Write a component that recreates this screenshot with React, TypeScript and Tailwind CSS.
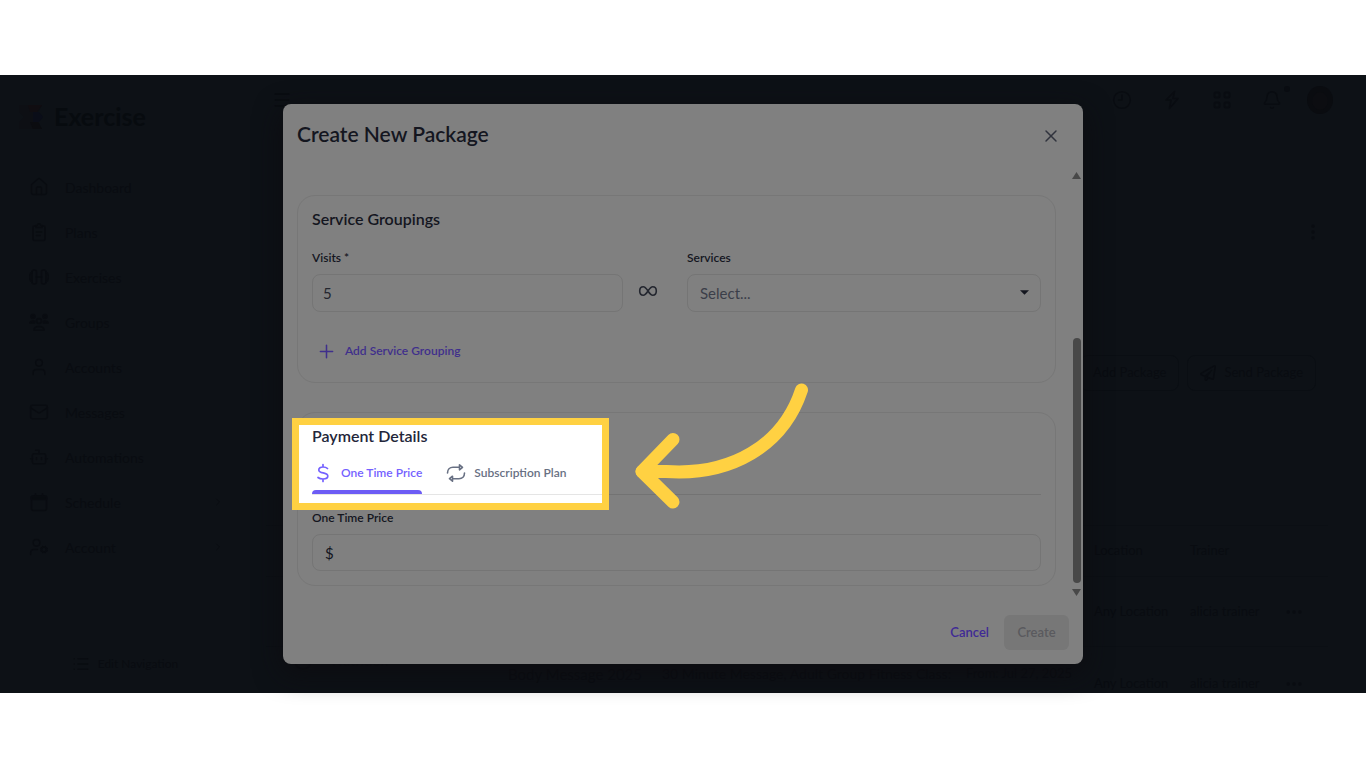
import React from "react";
import {
  House, User, Mail, Bot, UserCog, ChevronRight, List,
  Menu, Clock9, Bell, EllipsisVertical, Ellipsis, X, Plus,
} from "lucide-react";
import { FaRegPaperPlane } from "react-icons/fa";

const STROKE = {
  viewBox: "0 0 20 20",
  className: "h-5 w-5",
  fill: "none",
  stroke: "currentColor",
  strokeWidth: 1.6,
  strokeLinecap: "round",
  strokeLinejoin: "round",
  "aria-hidden": true,
} as const;

const HouseIcon = () => <House size={20} strokeWidth={1.75} />;
const UserIcon = () => <User size={20} strokeWidth={1.75} />;
const MailIcon = () => <Mail size={20} strokeWidth={1.75} />;
const BotIcon = () => <Bot size={20} strokeWidth={1.75} />;
const UserCogIcon = () => <UserCog size={20} strokeWidth={1.75} />;

function ClipboardIcon() {
  return (
    <svg {...STROKE}>
      <path d="M7 4H5.500C4.500 4 4 4.500 4 5.500V17C4 18 4.500 18.500 5.500 18.500H14.500C15.500 18.500 16 18 16 17V5.500C16 4.500 15.500 4 14.500 4H13" />
      <path d="M7 5.500V3.500H8.200C8.500 1.200 11.500 1.200 11.800 3.500H13V5.500ZM7.500 10H12.500M7.500 13.500H11" />
    </svg>
  );
}

function DumbbellIcon() {
  return (
    <svg {...STROKE}>
      <rect x="3" y="3" width="4.500" height="14" rx="2" />
      <rect x="12.500" y="3" width="4.500" height="14" rx="2" />
      <path d="M7.500 10H12.500M3 5.500C0 5.500 0 14.500 3 14.500M17 5.500C20 5.500 20 14.500 17 14.500" />
    </svg>
  );
}

function GroupIcon() {
  return (
    <svg {...STROKE}>
      <circle cx="4" cy="4.500" r="2" fill="currentColor" />
      <circle cx="16" cy="4.500" r="2" fill="currentColor" />
      <circle cx="10" cy="9" r="2.400" />
      <path d="M5 18.200C5 13.200 15 13.200 15 18.200ZM0.800 11C0.800 9.500 2.500 8.800 5.500 9.300V11ZM19.200 11C19.200 9.500 17.500 8.800 14.500 9.300V11Z" />
    </svg>
  );
}

function CalendarIcon() {
  return (
    <svg {...STROKE}>
      <rect x="2.500" y="4" width="15" height="14.500" rx="2" />
      <path d="M2.500 4.500H17.500V7.500H2.500ZM6.500 1.800V4M13.500 1.800V4" fill="currentColor" />
    </svg>
  );
}

const NAV = [
  { label: "Dashboard", Icon: HouseIcon },
  { label: "Plans", Icon: ClipboardIcon },
  { label: "Exercises", Icon: DumbbellIcon },
  { label: "Groups", Icon: GroupIcon },
  { label: "Accounts", Icon: UserIcon },
  { label: "Messages", Icon: MailIcon },
  { label: "Automations", Icon: BotIcon },
  { label: "Schedule", Icon: CalendarIcon, more: true },
  { label: "Account", Icon: UserCogIcon, more: true },
];

function Sidebar() {
  return (
    <aside className="flex w-[250px] shrink-0 flex-col px-[18px] pt-[26px] pb-5">
      <div className="flex h-8 items-center gap-[10px]">
        <svg viewBox="0 0 26 26" className="h-[26px] w-[26px]" aria-hidden="true">
          <path d="M1 1H24L20 8L24 13L20 18L24 25H1V18L6 13L1 8Z" fill="#0d0f14" />
          <path d="M10 1H24L19 8H12Z" fill="#100d11" />
          <path d="M15 8H21L25 13L21 18H15Z" fill="#0a0d18" />
          <path d="M12 18H20L24 25H15Z" fill="#0b0c10" />
        </svg>
        <span className="text-[25px] font-bold text-[#070b0f]">Exercise</span>
      </div>
      <nav className="mt-[34px]">
        <ul>
          {NAV.map(({ label, Icon, more }) => (
            <li key={label} className="pb-[5px]">
              <a href="#" className="flex h-10 items-center gap-4 pr-2 pl-[11px] text-[14px]">
                <Icon />
                <span className="flex-1">{label}</span>
                {more && <ChevronRight size={12} />}
              </a>
            </li>
          ))}
        </ul>
      </nav>
      <button type="button" className="mt-auto flex items-center justify-center gap-2 text-[12px]">
        <List size={18} /> Edit Navigation
      </button>
    </aside>
  );
}

function Workspace() {
  return (
    <div className="flex min-w-0 flex-1 flex-col">
      <header className="flex h-[50px] shrink-0 items-center justify-between pr-8 pl-[22px]">
        <Menu size={20} />
        <div className="flex items-center gap-6">
          <div className="flex items-center gap-[30px]">
            <Clock9 size={20} strokeWidth={1.75} />
            <svg {...STROKE}>
              <path d="M12.500 1.500L4 10H9L7.500 18.500L16 8.500H11Z" />
            </svg>
            <svg {...STROKE} strokeWidth={2}>
              <rect x="2.500" y="2.500" width="5" height="5" rx="1.500" />
              <rect x="12.500" y="2.500" width="5" height="5" rx="1.500" />
              <rect x="2.500" y="12.500" width="5" height="5" rx="1.500" />
              <rect x="12.500" y="12.500" width="5" height="5" rx="1.500" />
            </svg>
            <span className="relative">
              <Bell size={20} strokeWidth={1.75} />
              <span className="absolute -top-1 -right-2 h-[6px] w-[6px] rounded-full bg-[#090c11]" />
            </span>
          </div>
          <svg viewBox="0 0 28 28" className="h-7 w-7" aria-hidden="true">
            <ellipse cx="14" cy="14" rx="13" ry="14" fill="#0a0c10" />
            <ellipse cx="14" cy="15" rx="8" ry="9" fill="#0c0d11" />
          </svg>
        </div>
      </header>
      <div className="flex justify-end pt-[97px] pr-[43px]">
        <EllipsisVertical size={20} />
      </div>
      <div className="mt-[113px] mr-[38px] flex justify-end gap-2 px-3 text-[13px]">
        <button type="button" className="flex h-9 items-center rounded-lg border border-[#0a0e13] px-3">Add Package</button>
        <button type="button" className="flex h-9 items-center gap-2 rounded-lg border border-[#0a0e13] px-3">
          <FaRegPaperPlane size={16} /> Send Package
        </button>
      </div>
      <table className="mt-[134px] mr-[38px] ml-4 table-fixed text-left text-[13px]">
        <thead>
          <tr className="h-[51px] border-y border-[#0b0f14]">
            <th className="w-[242px]" />
            <th className="w-[154px]" />
            <th />
            <th className="w-[128px]" />
            <th className="w-[96px] font-normal">Location</th>
            <th className="w-[94px] font-normal">Trainer</th>
            <th className="w-[44px]" />
          </tr>
        </thead>
        <tbody>
          <tr className="h-[70px] border-b border-[#0b0f14]">
            <td /><td /><td /><td />
            <td>Any Location</td>
            <td>alicia trainer</td>
            <td><Ellipsis size={20} /></td>
          </tr>
          <tr className="h-[74px] whitespace-nowrap">
            <td className="pb-[46px]">
              <span className="flex items-center gap-5 pl-7 text-[14px]">
                <span className="h-[18px] w-[18px] rounded-full border-2 border-[#090c11]" />
                Nutrition
              </span>
            </td>
            <td className="pb-5 text-[15px]">Body Message 2025</td>
            <td className="pb-5 text-[14px]">30 Minute Message, Adult Group Fitness Class:</td>
            <td className="pb-5">From: Jul 27, 2025</td>
            <td>Any Location</td>
            <td>alicia trainer</td>
            <td><Ellipsis size={20} /></td>
          </tr>
        </tbody>
      </table>
    </div>
  );
}

const FIELD = "w-full rounded-lg border border-[#757575] bg-transparent text-[15px] outline-none";

function ServiceGroupings() {
  return (
    <section className="rounded-[18px] border border-[#777777] px-[14px] pt-[11px] pb-[19px]">
      <h2 className="text-[16px] leading-6 font-semibold">Service Groupings</h2>
      <div className="mt-[17px] grid grid-cols-[311fr_64px_354fr]">
        <div>
          <label htmlFor="visits" className="block h-[26px] text-[12px] leading-5 font-semibold">Visits *</label>
          <input id="visits" defaultValue="5" className={`${FIELD} h-[38px] px-[10px] text-[#23262f]`} />
        </div>
        <div className="flex items-end pb-[11px] pl-[15px]">
          <button type="button" aria-label="Unlimited visits" className="text-[#23262f]">
            <svg {...STROKE}>
              <path d="M10 10C8.300 7.500 7.200 5.800 5.300 5.800C3 5.800 1.700 7.600 1.700 10C1.700 12.400 3 14.200 5.300 14.200C7.200 14.200 8.300 12.500 10 10C11.700 7.500 12.800 5.800 14.700 5.800C17 5.800 18.300 7.600 18.300 10C18.300 12.400 17 14.200 14.700 14.200C12.800 14.200 11.700 12.500 10 10Z" />
            </svg>
          </button>
        </div>
        <div>
          <label htmlFor="services" className="block h-[26px] text-[12px] leading-5 font-semibold">Services</label>
          <div className="relative">
            <select id="services" className={`${FIELD} h-[38px] appearance-none px-3 text-[#3b3e49]`}>
              <option>Select...</option>
            </select>
            <svg viewBox="0 0 10 5" className="pointer-events-none absolute top-4 right-3 h-[5px] w-[9px]" aria-hidden="true">
              <path d="M0 0H10L5 5Z" fill="#14161f" />
            </svg>
          </div>
        </div>
      </div>
      <button type="button" className="mt-[27px] flex h-6 items-center gap-2 pl-1 text-[12px] font-semibold text-[#3f2f8c]">
        <Plus size={21} strokeWidth={1.75} /> Add Service Grouping
      </button>
    </section>
  );
}

function PaymentDetails() {
  return (
    <section className="relative mt-[29px] rounded-[18px] border border-[#777777] px-[14px] pt-[11px] pb-[14px]">
      <div className="absolute top-[5px] -left-[6px] h-[92px] w-[317px] bg-white" />
      <div className="relative">
        <h2 className="text-[16px] leading-6 font-semibold text-[#23263a]">Payment Details</h2>
        <div role="tablist" className="mt-[10px] flex gap-6 border-b border-black/10 text-[12px] font-semibold">
          <button type="button" role="tab" aria-selected="true" className="relative flex h-9 items-center gap-2 pb-[6px] pl-[1px] text-[#7461ff]">
            <svg {...STROKE} strokeWidth={1.7}>
              <path d="M10 1.500V4M10 16V18.500M14.500 5.500C13.500 4.500 12 4 10 4C7.500 4 5.800 5 5.800 6.900C5.800 11 14.800 8.700 14.800 13C14.800 15 12.800 16 10 16C8 16 6.200 15.500 5 14.500" />
            </svg>
            One Time Price
            <span className="absolute inset-x-0 bottom-0 h-1 rounded-t bg-[#6c5cf5]" />
          </button>
          <button type="button" role="tab" aria-selected="false" className="flex h-9 items-center gap-2 pb-[6px] text-[#687083]">
            <svg {...STROKE}>
              <path d="M1.500 10C1.500 6.500 3.800 4.300 7 4.300H13.500M13.500 1.800L16.500 4.300L13.500 6.800Z" />
              <path d="M18.500 10C18.500 13.500 16.200 15.700 13 15.700H6.500M6.500 13.200L3.500 15.700L6.500 18.200Z" />
            </svg>
            Subscription Plan
          </button>
        </div>
      </div>
      <div className="relative mt-[13px]">
        <label htmlFor="price" className="block h-[26px] text-[12px] leading-5 font-semibold">One Time Price</label>
        <input id="price" defaultValue="$" className={`${FIELD} h-[37px] px-3 text-[#14161f]`} />
      </div>
      <div className="pointer-events-none absolute top-[5px] -left-[6px] h-[92px] w-[317px] border-7 border-[#ffd142]" />
      <svg viewBox="0 0 174 126" className="pointer-events-none absolute -top-[30px] left-[337px] h-[126px] w-[174px]" fill="none" stroke="#ffd142" strokeWidth="13" strokeLinecap="round" strokeLinejoin="round" aria-hidden="true">
        <path d="M166.500 7C148 63 96 93 31 88.500L7 88.500" />
        <path d="M38 56.500L7 88.500L38 119" />
      </svg>
    </section>
  );
}

function PackageDialog() {
  return (
    <div role="dialog" aria-modal="true" aria-labelledby="dialog-title" className="w-full max-w-[800px] rounded-lg bg-[#808080] text-[#14161f] shadow-[0_8px_28px_#0d0c10]">
      <header className="flex h-16 items-start justify-between pt-4 pr-[22px] pl-[14px]">
        <h1 id="dialog-title" className="text-[21px] leading-7 font-semibold">Create New Package</h1>
        <button type="button" aria-label="Close" className="flex h-8 items-center text-[#30333d]"><X size={20} strokeWidth={1.75} /></button>
      </header>
      <div className="flex">
        <div className="min-w-0 flex-1 px-[14px] pt-[27px] pb-[14px]">
          <ServiceGroupings />
          <PaymentDetails />
        </div>
        <div className="flex w-[13px] flex-col items-center py-1" aria-hidden="true">
          <svg viewBox="0 0 9 7" className="h-[7px] w-[9px]"><path d="M4.500 0L9 7H0Z" fill="#484848" /></svg>
          <div className="mt-[159px] mb-[6px] w-2 flex-1 rounded-full bg-[#484848]" />
          <svg viewBox="0 0 9 7" className="h-[7px] w-[9px]"><path d="M4.500 7L9 0H0Z" fill="#484848" /></svg>
        </div>
      </div>
      <footer className="flex h-16 items-center justify-end gap-[15px] pr-[14px] text-[13px] font-semibold">
        <button type="button" className="h-[35px] pt-[2px] text-[#3f2a96]">Cancel</button>
        <button type="button" disabled className="h-[35px] w-[65px] rounded-md bg-[#777777] pt-[2px] text-[#5a5a5e]">Create</button>
      </footer>
    </div>
  );
}

export default function App() {
  return (
    <div className="flex h-screen flex-col bg-white py-[75px] font-['Lato','Liberation_Sans',sans-serif]">
      <main className="relative min-h-0 flex-1 bg-[#0d1116]">
        <div className="flex h-full overflow-hidden text-[#090c11]">
          <Sidebar />
          <Workspace />
        </div>
        <div className="absolute inset-0 flex items-center justify-center">
          <PackageDialog />
        </div>
      </main>
    </div>
  );
}
